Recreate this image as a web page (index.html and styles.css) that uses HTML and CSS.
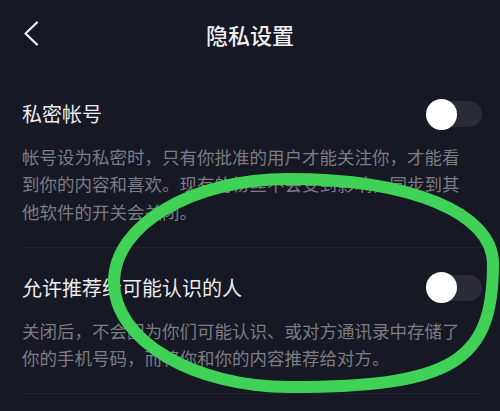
FILE: index.html
```html
<!DOCTYPE html>
<html lang="zh-CN">
<head>
  <meta charset="UTF-8">
  <title>隐私设置</title>
  <link rel="stylesheet" href="styles.css">
</head>
<body>

  <div class="top-bar">
    <svg class="back-icon" width="16" height="26" viewBox="0 0 16 26">
      <polyline points="14,1.5 2.5,12.5 14,23.5" fill="none" stroke="#f2f2f2" stroke-width="2.2" stroke-linecap="round" stroke-linejoin="round"/>
    </svg>
    <h1>隐私设置</h1>
  </div>

  <div class="setting-list">
    <div class="setting-item">
      <div class="setting-head">
        <span class="setting-title">私密帐号</span>
        <div class="switch"><div class="knob"></div></div>
      </div>
      <p class="setting-desc">帐号设为私密时，只有你批准的用户才能关注你，才能看到你的内容和喜欢。现有的粉丝不会受到影响，同步到其他软件的开关会关闭。</p>
    </div>

    <div class="setting-item">
      <div class="setting-head">
        <span class="setting-title">允许推荐给可能认识的人</span>
        <div class="switch"><div class="knob"></div></div>
      </div>
      <p class="setting-desc">关闭后，不会因为你们可能认识、或对方通讯录中存储了你的手机号码，而将你和你的内容推荐给对方。</p>
    </div>
  </div>

  <!-- marca verde desenhada por cima -->
  <svg class="mark" width="500" height="411" viewBox="0 0 500 411">
    <path d="M288,179 C411,179 493,213 493,264 C493,362 452,387 290,387 C193,387 114,340 114,282 C114,225 192,179 288,179 Z" fill="none" stroke="#3fd257" stroke-width="12"/>
  </svg>

</body>
</html>
```

FILE: styles.css
```css
body {
  margin: 0;
  background-color: #161823;
  font-family: "Noto Sans CJK SC", "Noto Sans", sans-serif;
  color: #ececee;
  width: 500px;
  height: 411px;
  overflow: hidden;
  position: relative;
}

.top-bar {
  height: 68px;
  display: flex;
  align-items: center;
  justify-content: center;
  position: relative;
}

.back-icon {
  position: absolute;
  left: 23px;
  top: 21px;
}

.top-bar h1 {
  margin: 0;
  font-size: 22px;
  font-weight: 500;
  color: #f0f0f2;
}

.setting-list {
  margin-top: 6px;
  padding: 0 18px 0 22px;
}

.setting-item {
  padding: 26px 0 22px;
  border-bottom: 1px solid #23242e;
}

.setting-head {
  display: flex;
  justify-content: space-between;
  align-items: center;
  height: 28px;
  margin-bottom: 15px;
}

.setting-title {
  font-size: 20px;
  line-height: 28px;
  color: #ececee;
}

.switch {
  width: 56px;
  height: 26px;
  border-radius: 13px;
  background-color: #2a2b35;
  display: flex;
  align-items: center;
}

.knob {
  width: 31px;
  height: 31px;
  border-radius: 50%;
  background-color: #fff;
}

.setting-desc {
  margin: 0;
  padding-right: 12px;
  font-size: 17.5px;
  line-height: 27.3px;
  color: #7b7c84;
}

.mark {
  position: absolute;
  left: 0;
  top: 0;
}
```
